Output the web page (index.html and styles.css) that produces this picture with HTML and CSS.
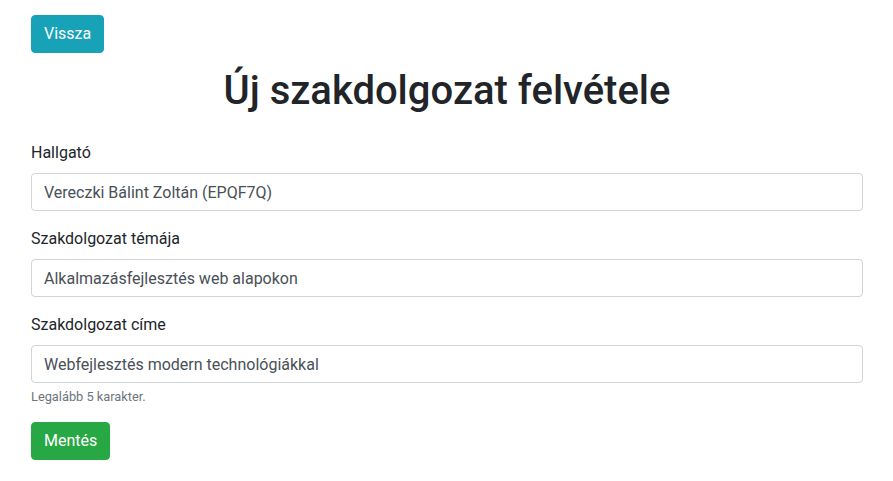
FILE: index.html
```html
<!DOCTYPE html>
<html lang="hu">
<head>
<meta charset="utf-8">
<title>Új szakdolgozat felvétele</title>
<link rel="stylesheet" href="styles.css">
</head>
<body>
<div class="page">
  <div class="top-bar">
    <button class="btn btn-info" type="button">Vissza</button>
  </div>
  <h1 class="title">Új szakdolgozat felvétele</h1>
  <form class="form">
    <div class="form-group">
      <label class="label" for="hallgato">Hallgató</label>
      <input class="form-control" id="hallgato" type="text" value="Vereczki Bálint Zoltán (EPQF7Q)">
    </div>
    <div class="form-group">
      <label class="label" for="tema">Szakdolgozat témája</label>
      <input class="form-control" id="tema" type="text" value="Alkalmazásfejlesztés web alapokon">
    </div>
    <div class="form-group">
      <label class="label" for="cim">Szakdolgozat címe</label>
      <input class="form-control" id="cim" type="text" value="Webfejlesztés modern technológiákkal">
      <small class="form-text">Legalább 5 karakter.</small>
    </div>
    <button class="btn btn-success" type="button">Mentés</button>
  </form>
</div>
</body>
</html>
```
FILE: styles.css
```css
* { box-sizing: border-box; }
html, body {
  margin: 0;
  padding: 0;
  background: #fff;
}
body {
  font-family: Roboto, "Liberation Sans", Arial, sans-serif;
  font-size: 16px;
  line-height: 1.5;
  color: #212529;
}
.page {
  padding: 15px 30px 15px 31px;
}
.top-bar {
  display: flex;
}
.btn {
  display: inline-block;
  font-family: inherit;
  font-size: 16px;
  font-weight: 400;
  line-height: 1.5;
  padding: 6px 12px;
  border: 1px solid transparent;
  border-radius: 4px;
  color: #fff;
  cursor: pointer;
}
.btn-info {
  background: #17a2b8;
  border-color: #17a2b8;
}
.btn-success {
  background: #28a745;
  border-color: #28a745;
}
.title {
  margin: 14px 0 26px;
  font-size: 40px;
  font-weight: 500;
  line-height: 1.2;
  text-align: center;
  color: #212529;
}
.form-group {
  margin-bottom: 16px;
  display: flex;
  flex-direction: column;
}
.label {
  margin-bottom: 8px;
}
.form-control {
  display: block;
  width: 100%;
  height: 38px;
  padding: 6px 12px;
  font-family: inherit;
  font-size: 16px;
  line-height: 1.5;
  color: #495057;
  background: #fff;
  border: 1px solid #ced4da;
  border-radius: 4px;
}
.form-text {
  display: block;
  margin-top: 4px;
  font-size: 12.8px;
  line-height: 1.5;
  color: #6c757d;
}
.form .btn {
  align-self: flex-start;
}
```
